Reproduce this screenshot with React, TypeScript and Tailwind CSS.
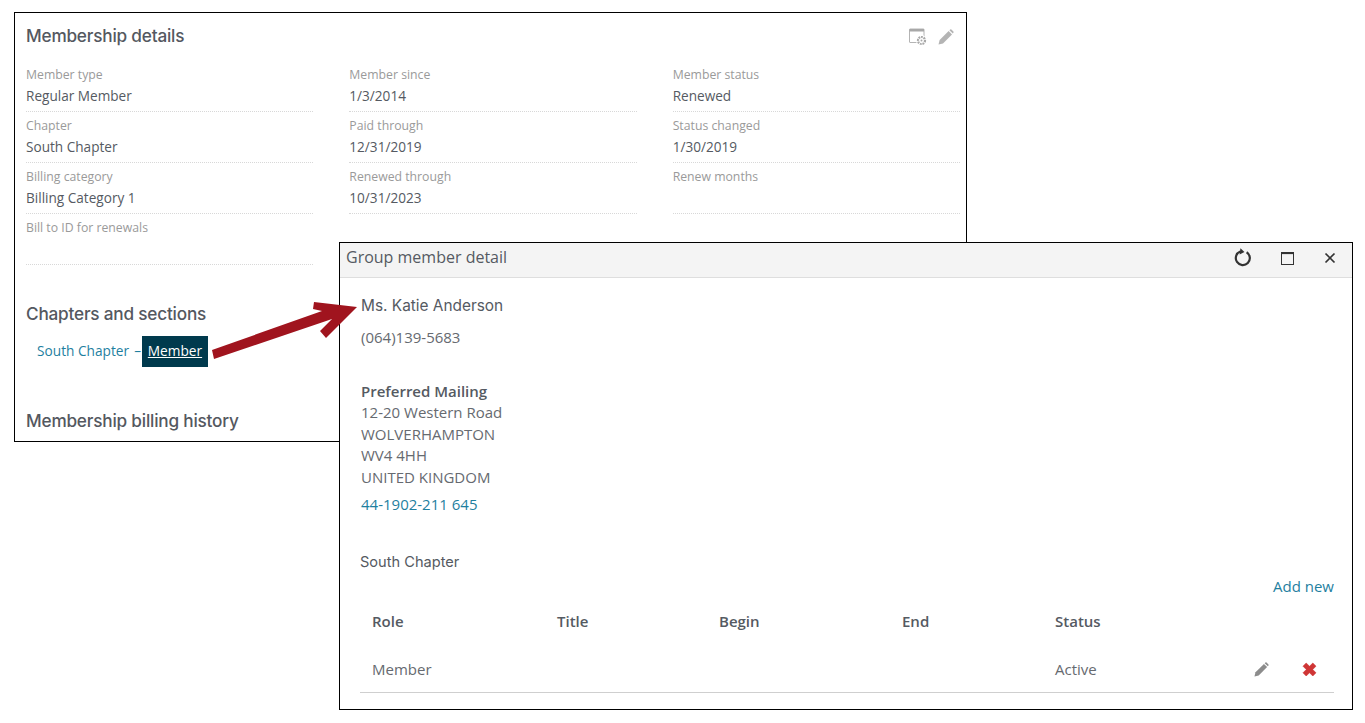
import React from "react";

const body = "font-['Open_Sans',sans-serif]";
const head = "font-['Inter',sans-serif]";

function Field({ label, value }: { label: string; value?: string }) {
  return (
    <div className="h-[51px] border-b border-dotted border-[#d8d8d8]">
      <div className="h-[24px] pt-[5px] text-[12.25px] leading-[18px] text-[#9a9a9a]">{label}</div>
      <div className="h-[22px] text-[13.6px] leading-[22px] text-[#555a62]">{value}</div>
    </div>
  );
}

function GearWindowIcon() {
  return (
    <svg width="18" height="18" viewBox="0 0 18 18" fill="none">
      <rect x="0.5" y="1" width="14.5" height="13.5" rx="0.5" stroke="#b4b4b4" strokeWidth="1" />
      <rect x="0.5" y="1" width="14.5" height="2.5" fill="#a8a8a8" />
      <circle cx="12.5" cy="12.5" r="5.4" fill="#ffffff" />
      <circle cx="12.5" cy="12.5" r="3.5" stroke="#a8a8a8" strokeWidth="2.2" strokeDasharray="1.8 0.8" />
      <circle cx="12.5" cy="12.5" r="1" fill="#a8a8a8" />
    </svg>
  );
}

function Pencil({ size, color }: { size: number; color: string }) {
  return (
    <svg width={size} height={size} viewBox="0 0 16 16">
      <path d="M0.5 15.5 L1.6 11 L10.6 2 L14 5.4 L5 14.4 Z" fill={color} />
      <path d="M11.4 1.2 L12.2 0.5 Q12.8 0.1 13.4 0.6 L15.4 2.6 Q15.9 3.2 15.4 3.8 L14.8 4.6 Z" fill={color} />
    </svg>
  );
}

export default function App() {
  return (
    <div className={`relative h-[723px] w-[1365px] overflow-hidden bg-white ${body}`}>
      {/* background card */}
      <div className="absolute left-[14px] top-[12px] h-[430px] w-[953px] overflow-hidden border border-black bg-white pl-[11px] pr-[6px]">
        <div className="flex h-[48px] items-center justify-between">
          <h2 className={`mb-[3px] text-[17.2px] font-medium tracking-[-0.2px] text-[#54585f] ${head}`}>Membership details</h2>
          <div className="mb-[1px] mr-[6px] flex items-center gap-[11px]">
            <GearWindowIcon />
            <Pencil size={16} color="#b4b4b4" />
          </div>
        </div>
        <div className="grid grid-cols-3 gap-x-[36px]">
          <div>
            <Field label="Member type" value="Regular Member" />
            <Field label="Chapter" value="South Chapter" />
            <Field label="Billing category" value="Billing Category 1" />
            <Field label="Bill to ID for renewals" />
          </div>
          <div>
            <Field label="Member since" value="1/3/2014" />
            <Field label="Paid through" value="12/31/2019" />
            <Field label="Renewed through" value="10/31/2023" />
          </div>
          <div>
            <Field label="Member status" value="Renewed" />
            <Field label="Status changed" value="1/30/2019" />
            <Field label="Renew months" />
          </div>
        </div>
        <h2 className={`mt-[37px] text-[17.2px] font-medium leading-[24px] tracking-[-0.2px] text-[#54585f] ${head}`}>Chapters and sections</h2>
        <div className="mt-[10px] flex items-center pl-[11px] text-[13.7px]">
          <span className="text-[#1f7f9f]">South Chapter</span>
          <span className="ml-[5px] mr-[1px] text-[#1f7f9f]">–</span>
          <span className="flex h-[31px] w-[66px] items-center justify-center bg-[#003a4d] text-white underline">Member</span>
        </div>
        <h2 className={`mt-[42px] text-[17.2px] font-medium leading-[24px] tracking-[-0.2px] text-[#54585f] ${head}`}>Membership billing history</h2>
      </div>

      {/* dialog */}
      <div className="absolute left-[339px] top-[242px] h-[468px] w-[1014px] border border-black bg-white">
        <div className="flex h-[35px] items-center justify-between border-b border-[#dedede] bg-[#f4f4f4] pb-[4px] pl-[6px] pr-[16px]">
          <span className="mb-[2px] text-[16px] text-[#555a62]">Group member detail</span>
          <div className="flex items-center">
            <svg width="20" height="20" viewBox="0 0 20 20" fill="none">
              <path d="M7.2 3.6 A7 7 0 1 0 13.6 4.2" stroke="#333" strokeWidth="2.2" />
              <path d="M7 0.5 L11.5 3.6 L7 6.8 Z" fill="#333" transform="rotate(8 9 3.6)" />
            </svg>
            <svg className="ml-[28px]" width="13" height="13" viewBox="0 0 13 13" fill="none">
              <rect x="0.5" y="0.5" width="12" height="12" stroke="#333" strokeWidth="1" />
              <rect x="0.5" y="0.5" width="12" height="1.6" fill="#333" />
            </svg>
            <svg className="ml-[30px]" width="12" height="12" viewBox="0 0 12 12" fill="none">
              <path d="M1.5 1.5 L10.5 10.5 M10.5 1.5 L1.5 10.5" stroke="#333" strokeWidth="1.7" />
            </svg>
          </div>
        </div>
        <div className="pl-[21px] pr-[18px]">
          <h3 className={`mt-[17px] text-[15.4px] font-normal leading-[22px] text-[#555a62] ${head}`}>Ms. Katie Anderson</h3>
          <div className="mt-[9px] text-[15px] leading-[22px] text-[#666a70]">(064)139-5683</div>
          <div className="mt-[33px] text-[15px] font-semibold leading-[20px] text-[#555a62]">Preferred Mailing</div>
          <div className="pt-[1px] text-[15px] leading-[21.5px] text-[#666a70]">
            <div>12-20 Western Road</div>
            <div>WOLVERHAMPTON</div>
            <div>WV4 4HH</div>
            <div>UNITED KINGDOM</div>
          </div>
          <div className="mt-[5px] text-[15px] leading-[22px] text-[#1f7f9f]">44-1902-211 645</div>
          <div className={`ml-[-1px] mt-[36px] text-[14.6px] leading-[22px] text-[#555a62] ${head}`}>South Chapter</div>
          <div className="mt-[2px] text-right text-[15px] leading-[22px] text-[#1f7f9f]">Add new</div>
          <div className="ml-[-1px]">
            <div className="flex h-[49px] items-center text-[15px] font-semibold text-[#555a62]">
              <span className="w-[197px] pl-[12px]">Role</span>
              <span className="w-[162px]">Title</span>
              <span className="w-[183px]">Begin</span>
              <span className="w-[153px]">End</span>
              <span>Status</span>
            </div>
            <div className="flex h-[47px] items-center border-b border-[#cfcfcf] pt-[1px] text-[15px] text-[#666a70]">
              <span className="w-[695px] pl-[12px]">Member</span>
              <span className="w-[199px]">Active</span>
              <Pencil size={15} color="#8c8c8c" />
              <svg className="ml-[33px]" width="15" height="15" viewBox="0 0 15 15">
                <path d="M4.2 1 L7.5 4.3 L10.8 1 L14 4.2 L10.7 7.5 L14 10.8 L10.8 14 L7.5 10.7 L4.2 14 L1 10.8 L4.3 7.5 L1 4.2 Z" fill="#cf3535" stroke="#cf3535" strokeWidth="0.6" strokeLinejoin="round" />
              </svg>
            </div>
          </div>
        </div>
      </div>

      {/* arrow */}
      <svg className="absolute left-[205px] top-[295px]" width="160" height="70" viewBox="205 295 160 70">
        <path d="M314 302 L357 307 L326 338 L320 331 L332 319 L214 359 L212 350 L322 311 L313 309 Z" fill="#a0141e" />
      </svg>
    </div>
  );
}
